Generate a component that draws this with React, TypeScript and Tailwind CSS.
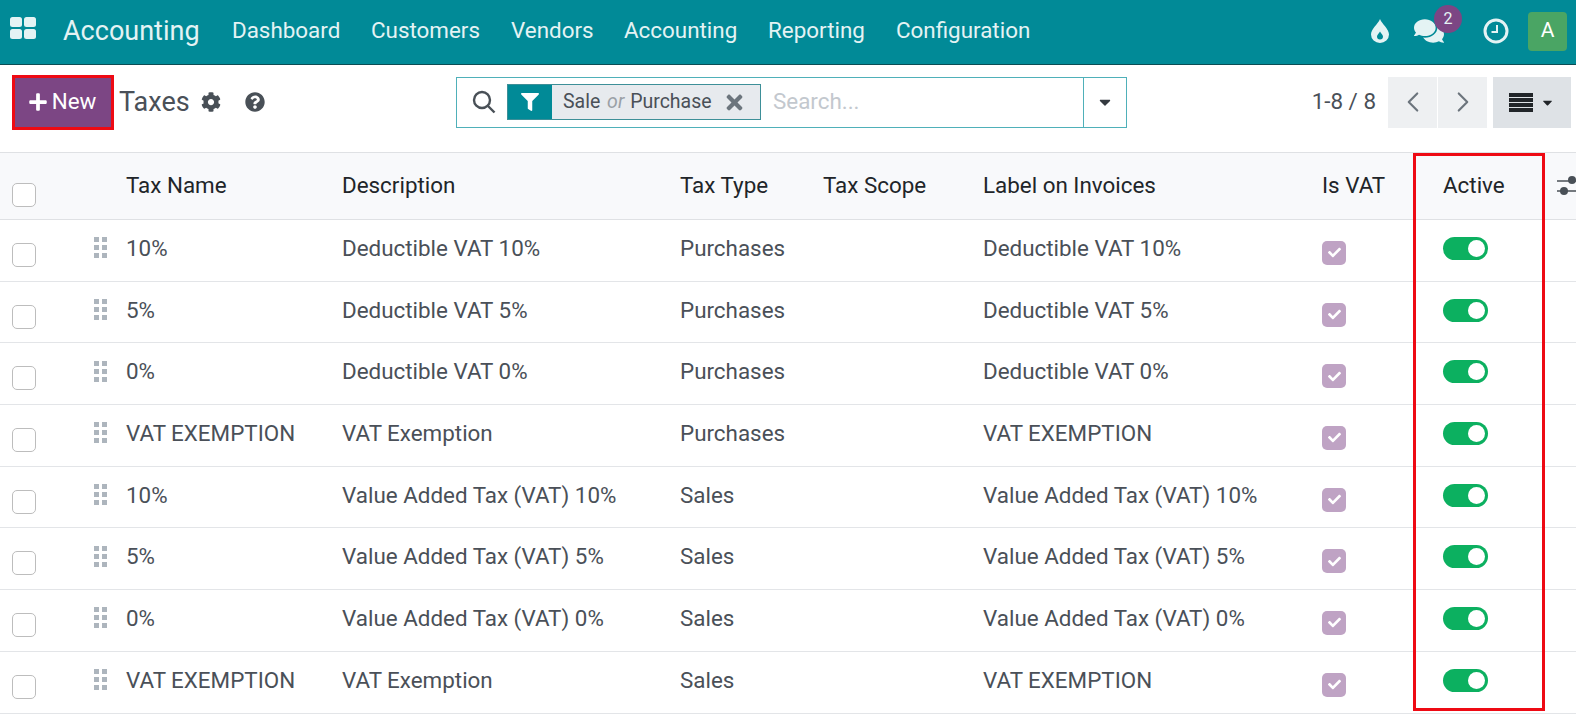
import { ChevronLeft, ChevronRight } from 'lucide-react';
import { FaCaretDown, FaCheck, FaCog, FaComments, FaFilter, FaPlus, FaQuestionCircle, FaTimes } from 'react-icons/fa';

const menu = [
  { label: 'Dashboard', width: 'w-[139px]' },
  { label: 'Customers', width: 'w-[140px]' },
  { label: 'Vendors', width: 'w-[113px]' },
  { label: 'Accounting', width: 'w-[144px]' },
  { label: 'Reporting', width: 'w-[128px]' },
  { label: 'Configuration', width: 'w-[150px]' },
];

const rows = [
  { name: '10%', description: 'Deductible VAT 10%', type: 'Purchases', label: 'Deductible VAT 10%' },
  { name: '5%', description: 'Deductible VAT 5%', type: 'Purchases', label: 'Deductible VAT 5%' },
  { name: '0%', description: 'Deductible VAT 0%', type: 'Purchases', label: 'Deductible VAT 0%' },
  { name: 'VAT EXEMPTION', description: 'VAT Exemption', type: 'Purchases', label: 'VAT EXEMPTION' },
  { name: '10%', description: 'Value Added Tax (VAT) 10%', type: 'Sales', label: 'Value Added Tax (VAT) 10%' },
  { name: '5%', description: 'Value Added Tax (VAT) 5%', type: 'Sales', label: 'Value Added Tax (VAT) 5%' },
  { name: '0%', description: 'Value Added Tax (VAT) 0%', type: 'Sales', label: 'Value Added Tax (VAT) 0%' },
  { name: 'VAT EXEMPTION', description: 'VAT Exemption', type: 'Sales', label: 'VAT EXEMPTION' },
];

function Checkbox() {
  return <span className="block h-6 w-6 rounded-[5px] border border-[#bdbdbd] bg-white" />;
}

function Handle() {
  return (
    <svg width="14" height="22" viewBox="0 0 14 22" className="fill-[#adb5bd]">
      <rect x="0" y="0" width="5" height="5" />
      <rect x="8" y="0" width="5" height="5" />
      <rect x="0" y="8" width="5" height="5" />
      <rect x="8" y="8" width="5" height="5" />
      <rect x="0" y="16" width="5" height="5" />
      <rect x="8" y="16" width="5" height="5" />
    </svg>
  );
}

function AppsIcon() {
  return (
    <svg width="27" height="22" viewBox="0 0 27 22" className="fill-[#e4f3f4]">
      <rect x="0" y="0" width="12" height="10" rx="2.5" />
      <rect x="14" y="0" width="12" height="10" rx="2.5" />
      <rect x="0" y="12" width="12" height="10" rx="2.5" />
      <rect x="14" y="12" width="12" height="10" rx="2.5" />
    </svg>
  );
}

function DropIcon() {
  return (
    <svg width="18" height="24" viewBox="0 0 18 24">
      <path d="M9 0C7 5 0 10 0 15.500A9 8.500 0 0 0 18 15.500C18 10 11 5 9 0Z" fill="#e4f3f4" />
      <path d="M9 12.500C8.200 14.500 6 15.500 6 17.500A3 3 0 0 0 12 17.500C12 15.500 9.800 14.500 9 12.500Z" fill="#018a97" />
    </svg>
  );
}

function ClockIcon() {
  return (
    <svg width="26" height="26" viewBox="0 0 26 26" fill="none" stroke="#e4f3f4">
      <circle cx="13" cy="13" r="11" strokeWidth="3" />
      <path d="M14 7V14H8.500" strokeWidth="2" />
    </svg>
  );
}

function SearchIcon() {
  return (
    <svg width="24" height="24" viewBox="0 0 24 24" fill="none" stroke="#495057" strokeWidth="2.400">
      <circle cx="10" cy="10" r="8" />
      <path d="M16 16L22.500 22.500" />
    </svg>
  );
}

function ListIcon() {
  return (
    <svg width="24" height="19" viewBox="0 0 24 19" className="fill-[#212529]">
      <rect x="0" y="0" width="24" height="4" />
      <rect x="0" y="5" width="24" height="4" />
      <rect x="0" y="10" width="24" height="4" />
      <rect x="0" y="15" width="24" height="4" />
    </svg>
  );
}

function OptionsIcon() {
  return (
    <svg width="24" height="22" viewBox="0 0 24 22" className="shrink-0">
      <path d="M0 6H24M0 16H24" stroke="#495057" strokeWidth="1.500" />
      <circle cx="15" cy="5" r="4" fill="#495057" />
      <circle cx="7" cy="16" r="4" fill="#495057" />
    </svg>
  );
}

export default function App() {
  return (
    <div className="relative h-[721px] w-[1576px] overflow-hidden bg-white font-['Roboto',sans-serif] text-[22.400px] text-[#4a5058]">
      <header className="flex h-[65px] items-center border-b border-[#0b4d54] bg-[#018a97] pb-[2px] text-[#e4f3f4]">
        <div className="mb-[6px] ml-[10px] w-[53px]">
          <AppsIcon />
        </div>
        <span className="w-[169px] text-[27px]">Accounting</span>
        {menu.map((m) => (
          <span key={m.label} className={m.width}>
            {m.label}
          </span>
        ))}
        <div className="ml-auto flex items-center">
          <DropIcon />
          <div className="relative ml-[25px]">
            <FaComments className="h-[30px] w-[30px]" />
            <span className="absolute -top-[11px] left-[20px] flex h-[28px] w-[28px] items-center justify-center rounded-full bg-[#7c4684] text-[16px]">
              2
            </span>
          </div>
          <div className="ml-[39px]">
            <ClockIcon />
          </div>
          <span className="ml-[19px] mr-[9px] flex h-[39px] w-[39px] items-center justify-center rounded-[4px] bg-[#4aa564] text-[21px] text-white">
            A
          </span>
        </div>
      </header>

      <div className="flex h-[87px] items-center pb-[13px]">
        <button className="ml-[12px] flex h-[55px] w-[102px] items-center justify-center gap-[4px] border-[3px] border-[#ee0a14] bg-[#7c4684] pr-[2px] text-white">
          <FaPlus className="h-[20px] w-[20px]" />
          New
        </button>
        <span className="ml-[5px] w-[82px] text-[27px]">Taxes</span>
        <FaCog className="h-[20px] w-[20px] text-[#495057]" />
        <FaQuestionCircle className="ml-[24px] h-[20px] w-[20px] text-[#495057]" />
        <div className="ml-[191px] flex h-[51px] w-[671px] items-center border border-[#4fb0b9]">
          <div className="ml-[15px] w-[35px]">
            <SearchIcon />
          </div>
          <div className="flex h-[36px] w-[254px] items-center border border-[#3d8f98] bg-[#e7eaee]">
            <span className="flex h-full w-[44px] items-center justify-center bg-[#018a97] text-white">
              <FaFilter className="h-[18px] w-[18px]" />
            </span>
            <span className="ml-[11px] w-[160px] whitespace-nowrap text-[19.500px]">
              Sale <i className="pl-[2px] pr-[1px] text-[#9aa0a6]">or</i> Purchase
            </span>
            <FaTimes className="h-[23px] w-[23px] text-[#6c757d]" />
          </div>
          <span className="ml-[12px] flex-1 text-[#c3c8ce]">Search...</span>
          <span className="flex h-full w-[43px] items-center justify-center border-l border-[#4fb0b9] text-[#343a40]">
            <FaCaretDown className="h-[18px] w-[18px]" />
          </span>
        </div>
        <span className="ml-auto">1-8 / 8</span>
        <div className="ml-[12px] flex h-[51px] w-[99px] gap-px">
          <span className="flex flex-1 items-center justify-center bg-[#eef0f2] text-[#6c757d]">
            <ChevronLeft className="h-[34px] w-[34px]" strokeWidth={1.500} />
          </span>
          <span className="flex flex-1 items-center justify-center bg-[#eef0f2] text-[#6c757d]">
            <ChevronRight className="h-[34px] w-[34px]" strokeWidth={1.500} />
          </span>
        </div>
        <div className="ml-[6px] mr-[5px] flex h-[51px] w-[78px] items-center justify-center gap-[7px] bg-[#dee2e6]">
          <ListIcon />
          <FaCaretDown className="h-[15px] w-[15px] text-[#212529]" />
        </div>
      </div>

      <table className="w-[1576px] table-fixed border-collapse">
        <colgroup>
          <col className="w-[82px]" />
          <col className="w-[44px]" />
          <col className="w-[216px]" />
          <col className="w-[338px]" />
          <col className="w-[143px]" />
          <col className="w-[160px]" />
          <col className="w-[339px]" />
          <col className="w-[121px]" />
          <col className="w-[114px]" />
          <col className="w-[19px]" />
        </colgroup>
        <thead>
          <tr className="h-[67px] border-y border-[#dfe1e4] bg-[#f8f9fb] text-left text-[#212529]">
            <th className="pl-[12px] pt-[18px] font-normal">
              <Checkbox />
            </th>
            <th className="font-normal" />
            <th className="pb-[1px] font-normal">Tax Name</th>
            <th className="pb-[1px] font-normal">Description</th>
            <th className="pb-[1px] font-normal">Tax Type</th>
            <th className="pb-[1px] font-normal">Tax Scope</th>
            <th className="pb-[1px] font-normal">Label on Invoices</th>
            <th className="pb-[1px] font-normal">Is VAT</th>
            <th className="pb-[1px] font-normal">Active</th>
            <th className="overflow-hidden pb-[1px] font-normal">
              <OptionsIcon />
            </th>
          </tr>
        </thead>
        <tbody>
          {rows.map((r, i) => (
            <tr key={i} className="h-[61.700px] border-b border-[#e3e5e8]">
              <td className="pl-[12px] pt-[9px]">
                <Checkbox />
              </td>
              <td className="pb-[4px] pl-[12px]">
                <Handle />
              </td>
              <td className="whitespace-nowrap pb-[3px]">{r.name}</td>
              <td className="whitespace-nowrap pb-[3px]">{r.description}</td>
              <td className="pb-[3px]">{r.type}</td>
              <td />
              <td className="whitespace-nowrap pb-[3px]">{r.label}</td>
              <td className="pt-[5px]">
                <span className="flex h-6 w-6 items-center justify-center rounded-[5px] bg-[#bfa3c4] text-white">
                  <FaCheck className="h-[13px] w-[13px]" />
                </span>
              </td>
              <td className="pb-[4px]">
                <span className="flex h-[23px] w-[45px] items-center justify-end rounded-full bg-[#0cb060] pr-[3px]">
                  <span className="h-[17px] w-[17px] rounded-full bg-white" />
                </span>
              </td>
              <td />
            </tr>
          ))}
        </tbody>
      </table>

      <div className="absolute left-[1413px] top-[153px] h-[558px] w-[132px] border-[3px] border-[#ee0a14]" />
    </div>
  );
}
